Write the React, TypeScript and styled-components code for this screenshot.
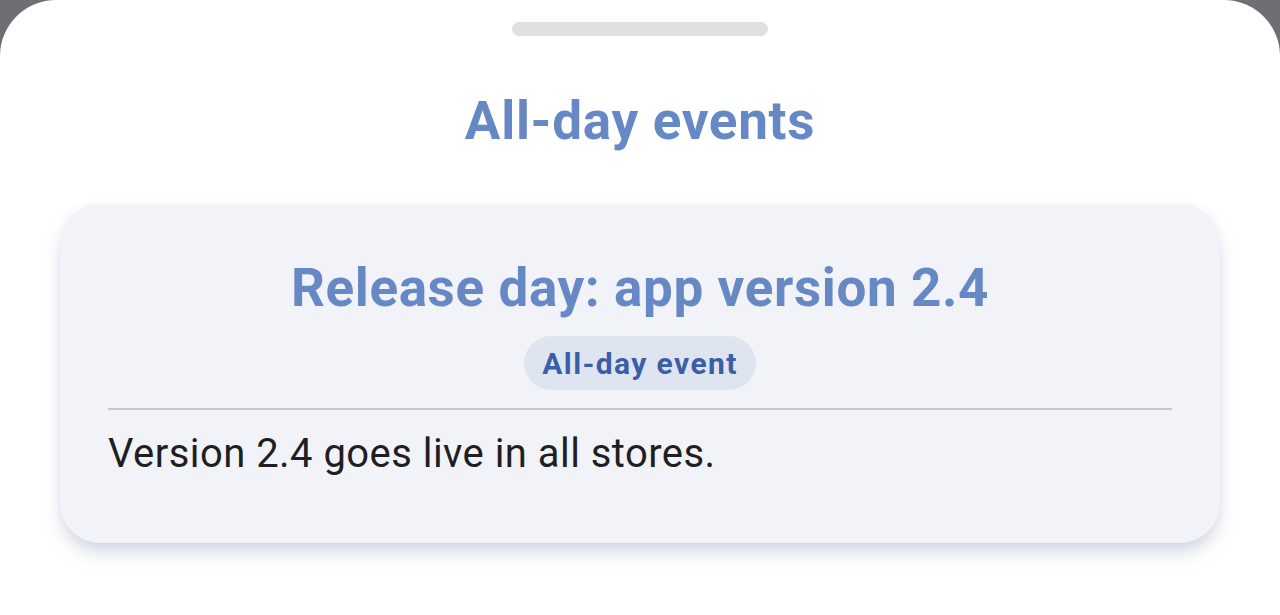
import React from 'react'
import styled, { createGlobalStyle } from 'styled-components'

const GlobalStyle = createGlobalStyle`
  html, body {
    margin: 0;
    padding: 0;
    height: 100%;
    background: #6f6f73;
  }
  #root {
    height: 100%;
  }
  * {
    box-sizing: border-box;
  }
`

const Sheet = styled.div`
  height: 615px;
  background: #ffffff;
  border-radius: 56px 56px 0 0;
  display: flex;
  flex-direction: column;
  align-items: center;
  padding: 22px 60px 0;
  font-family: Roboto, 'Noto Sans', sans-serif;
  overflow: hidden;
`

const Handle = styled.div`
  width: 256px;
  height: 14px;
  border-radius: 7px;
  background: #e0e0e0;
`

const Heading = styled.h1`
  margin: 55px 0 0;
  font-size: 53px;
  line-height: 60px;
  font-weight: 700;
  letter-spacing: 0.7px;
  color: #6688c4;
  text-align: center;
`

const Card = styled.div`
  align-self: stretch;
  margin-top: 53px;
  background: #f2f3f8;
  border-radius: 40px;
  padding: 54px 48px 65px;
  display: flex;
  flex-direction: column;
  align-items: center;
  box-shadow: 0 12px 20px -4px rgba(120, 135, 170, 0.34), 0 2px 8px rgba(120, 135, 170, 0.1);
`

const CardTitle = styled.h2`
  margin: 0;
  font-size: 53px;
  line-height: 60px;
  font-weight: 700;
  letter-spacing: 0.6px;
  color: #6688c4;
  text-align: center;
`

const Chip = styled.span`
  margin-top: 18px;
  height: 54px;
  padding: 0 18px;
  border-radius: 27px;
  background: #dfe5f0;
  color: #3a5ea8;
  font-size: 30px;
  font-weight: 700;
  letter-spacing: 1.4px;
  display: inline-flex;
  align-items: center;
`

const Divider = styled.hr`
  align-self: stretch;
  margin: 18px 0 0;
  border: none;
  height: 2px;
  background: #c6c6ce;
`

const Body = styled.p`
  align-self: stretch;
  margin: 20px 0 0;
  font-size: 40px;
  line-height: 48px;
  letter-spacing: 0.45px;
  color: #1f1f23;
`

export default function App() {
  return (
    <>
      <GlobalStyle />
      <Sheet>
        <Handle />
        <Heading>All-day events</Heading>
        <Card>
          <CardTitle>Release day: app version 2.4</CardTitle>
          <Chip>All-day event</Chip>
          <Divider />
          <Body>Version 2.4 goes live in all stores.</Body>
        </Card>
      </Sheet>
    </>
  )
}
